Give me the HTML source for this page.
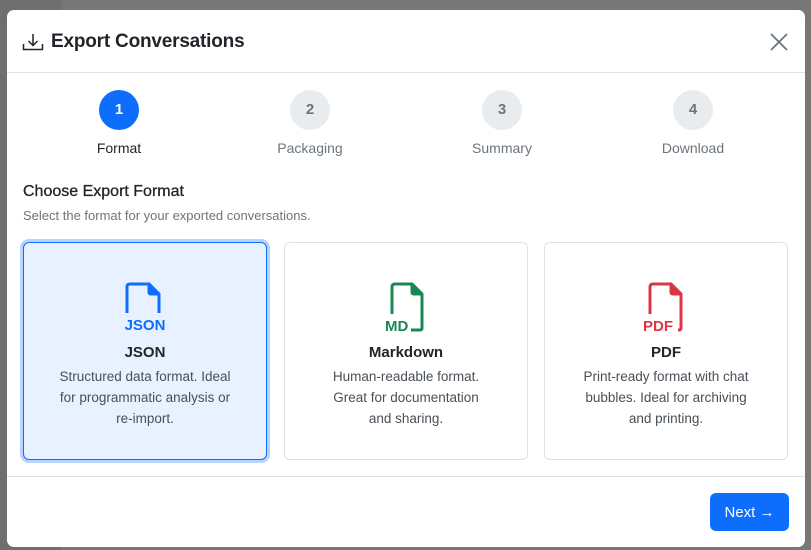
<!DOCTYPE html>
<html><head><style>
*{box-sizing:border-box;margin:0;padding:0}
body{width:811px;height:550px;background:#777;font-family:"Liberation Sans",sans-serif;position:relative;overflow:hidden}
.bgbar{position:absolute;left:0;top:0;width:62px;height:550px;background:#6f6f6f}
.modal{position:absolute;left:7px;top:10px;width:798px;height:537px;background:#fff;border-radius:7px;overflow:hidden}
.hdr{height:63px;border-bottom:1px solid #dee2e6;position:relative}
.hdr h1{position:absolute;left:44px;top:21px;font-size:19px;font-weight:bold;color:#212529;letter-spacing:-0.2px}
.close{position:absolute;right:16px;top:22px}
.step{position:absolute;width:120px;text-align:center;top:80px}
.step .c{width:40px;height:40px;border-radius:50%;margin:0 auto;background:#e9ecef;color:#6c757d;font-weight:bold;font-size:15px;line-height:40px}
.step .l{margin-top:10px;font-size:14px;color:#6c757d}
.step.a .c{background:#0d6efd;color:#fff}
.step.a .l{color:#212529}
h2{position:absolute;left:16px;top:173px;font-size:16px;font-weight:normal;color:#212529;-webkit-text-stroke:.3px #212529}
.sub{position:absolute;left:16px;top:198px;font-size:13px;color:#6c757d}
.card{position:absolute;top:232px;width:244px;height:218px;border:1px solid #dee2e6;border-radius:6px;text-align:center}
.card.sel{background:#e7f1ff;border:1px solid #0d6efd;box-shadow:0 0 0 3px #b6d4fe}
.card svg{position:absolute;left:50%;margin-left:-24px;top:33px}
.card .t{position:absolute;top:101px;width:100%;font-size:15px;font-weight:bold;color:#212529}
.card .d{position:absolute;top:123px;left:30px;right:30px;font-size:13.5px;line-height:21px;color:#495057}
.ftr{position:absolute;left:0;right:0;top:466px;border-top:1px solid #dee2e6}
.btn{position:absolute;left:710px;top:493px;width:79px;height:38px;background:#0d6efd;border-radius:6px;color:#fff;font-size:15px;line-height:39px;text-align:center}
</style></head><body>
<div class="bgbar"></div>
<div class="modal">
<div class="hdr">
<svg style="position:absolute;left:15px;top:22px" width="22" height="20" viewBox="0 0 22 20" fill="none" stroke="#212529" stroke-width="1.5"><path d="M11 2v11M6.5 9l4.5 4.5 4.5-4.5M1.5 12v5.5h19V12"/></svg>
<h1>Export Conversations</h1>
<svg class="close" width="20" height="20" viewBox="0 0 20 20" stroke="#6c757d" stroke-width="1.8"><path d="M2 2l16 16M18 2L2 18"/></svg>
</div>
<div class="step a" style="left:52px"><div class="c">1</div><div class="l">Format</div></div>
<div class="step" style="left:243px"><div class="c">2</div><div class="l">Packaging</div></div>
<div class="step" style="left:435px"><div class="c">3</div><div class="l">Summary</div></div>
<div class="step" style="left:626px"><div class="c">4</div><div class="l">Download</div></div>
<h2>Choose Export Format</h2>
<div class="sub">Select the format for your exported conversations.</div>
<div class="card sel" style="left:16px">
<svg width="48" height="56" viewBox="0 0 48 56" fill="none" stroke="#0d6efd" stroke-width="3" stroke-linejoin="round"><path d="M6 37V11q0-3 3-3h19l10 10v19"/><path d="M28 8v8q0 2 2 2h8z" fill="#0d6efd"/><text x="24" y="54" text-anchor="middle" font-family="Liberation Sans" font-weight="bold" font-size="15" fill="#0d6efd" stroke="none">JSON</text></svg>
<div class="t">JSON</div><div class="d">Structured data format. Ideal for programmatic analysis or re-import.</div></div>
<div class="card" style="left:277px">
<svg width="48" height="56" viewBox="0 0 48 56" fill="none" stroke="#198754" stroke-width="3" stroke-linejoin="round"><path d="M10 38V11q0-3 3-3h17l10 10v34q0 2-2 2h-9"/><path d="M30 8v8q0 2 2 2h8z" fill="#198754"/><text x="3" y="55" font-family="Liberation Sans" font-weight="bold" font-size="15" fill="#198754" stroke="none">MD</text></svg>
<div class="t">Markdown</div><div class="d" style="left:40px;right:40px">Human-readable format. Great for documentation and sharing.</div></div>
<div class="card" style="left:537px">
<svg width="48" height="56" viewBox="0 0 48 56" fill="none" stroke="#dc3545" stroke-width="3" stroke-linejoin="round"><path d="M8 38V11q0-3 3-3h18l10 10v34q0 2-2 2h-1"/><path d="M29 8v8q0 2 2 2h8z" fill="#dc3545"/><text x="1" y="55" font-family="Liberation Sans" font-weight="bold" font-size="15" fill="#dc3545" stroke="none">PDF</text></svg>
<div class="t">PDF</div><div class="d">Print-ready format with chat bubbles. Ideal for archiving and printing.</div></div>
<div class="ftr"></div>
</div>
<div class="btn">Next →</div>
</body></html>
